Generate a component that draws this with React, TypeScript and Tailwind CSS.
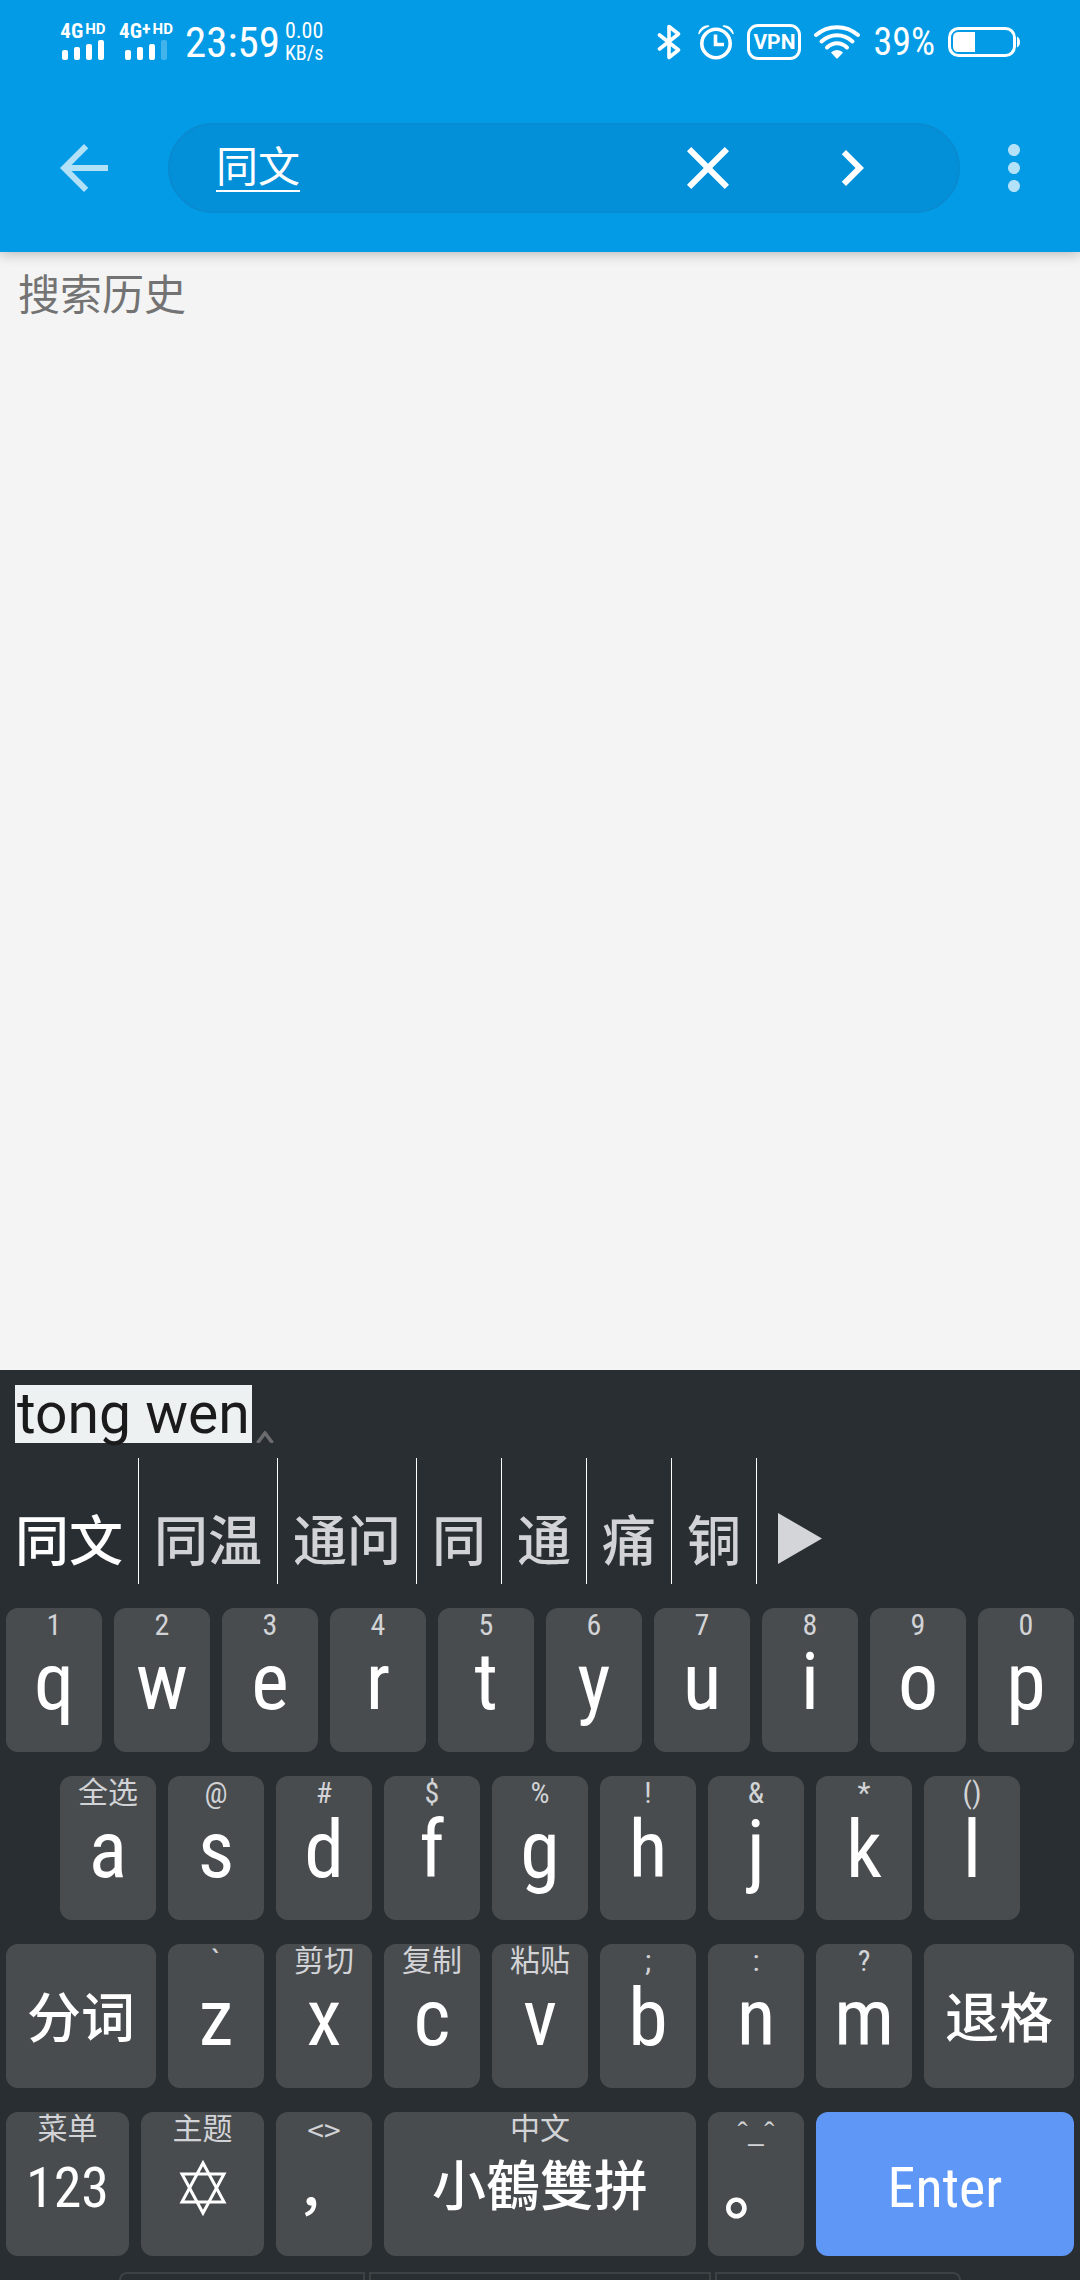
import React, { useState } from "react";
import { MdArrowBack, MdChevronRight, MdClose, MdMoreVert } from "react-icons/md";

type KeyDef = {
  label: React.ReactNode;
  hint?: string;
  name?: string;
  kind: "letter" | "word" | "latin" | "comma" | "period" | "icon";
  span?: string;
  primary?: boolean;
  wideHint?: boolean;
};

const letter = (label: string, hint: string): KeyDef => ({ label, hint, kind: "letter" });

const Star = () => (
  <svg viewBox="0 0 50 58" className="h-[58px] w-[50px]" fill="none" stroke="currentColor" strokeWidth="3" aria-hidden="true">
    <path d="M25 4 46 43H4z" />
    <path d="M25 54 46 15H4z" />
  </svg>
);

const rows: KeyDef[][] = [
  [
    letter("q", "1"), letter("w", "2"), letter("e", "3"), letter("r", "4"), letter("t", "5"),
    letter("y", "6"), letter("u", "7"), letter("i", "8"), letter("o", "9"), letter("p", "0"),
  ],
  [
    letter("a", "全选"), letter("s", "@"), letter("d", "#"), letter("f", "$"), letter("g", "%"),
    letter("h", "!"), letter("j", "&"), letter("k", "*"), letter("l", "()"),
  ],
  [
    { label: "分词", kind: "word", span: "col-span-6" },
    letter("z", "`"), letter("x", "剪切"), letter("c", "复制"), letter("v", "粘贴"),
    letter("b", ";"), letter("n", ":"), letter("m", "?"),
    { label: "退格", kind: "word", span: "col-span-6" },
  ],
  [
    { label: "123", hint: "菜单", kind: "latin", span: "col-span-5" },
    { label: <Star />, hint: "主题", name: "主题", kind: "icon", span: "col-span-5" },
    { label: "，", hint: "<>", kind: "comma", wideHint: true },
    { label: "小鶴雙拼", hint: "中文", kind: "word", span: "col-span-12" },
    { label: "。", hint: "ˆ_ˆ", kind: "period", wideHint: true },
    { label: "Enter", kind: "latin", span: "col-span-10", primary: true },
  ],
];

const labelStyle = {
  letter: "text-[80px] leading-[80px]",
  word: "text-[54px] leading-[84px] font-medium",
  latin: "text-[56px] leading-[84px]",
  comma: "text-[54px] leading-[92px] font-medium",
  period: "text-[64px] leading-[92px] font-bold",
  icon: "flex h-[84px] items-center",
};

function Key({ k }: { k: KeyDef }) {
  return (
    <button
      type="button"
      aria-label={k.name}
      className={`mx-1.5 my-3 flex h-36 flex-col items-center whitespace-nowrap rounded-xl text-white ${
        k.primary ? "bg-[#5e97f6]" : "bg-[#494c4e]"
      } ${k.span ?? "col-span-4"}`}
    >
      <span
        className={`block h-[34px] text-[30px] leading-[34px] text-[#d2d3d6] ${
          k.wideHint ? "font-['Noto_Sans_CJK_SC']" : ""
        }`}
      >
        {k.hint}
      </span>
      <span className={`block ${labelStyle[k.kind]}`}>{k.label}</span>
    </button>
  );
}

const candidates = ["同文", "同温", "通问", "同", "通", "痛", "铜"];

function Signal({ plus, weak }: { plus?: boolean; weak?: boolean }) {
  return (
    <div className={`flex flex-col items-center ${plus ? "w-14" : "w-[46px]"}`}>
      <div className="flex h-4 items-start font-bold leading-4">
        <span className="text-[21px] leading-4">4G</span>
        {plus && <span className="text-lg leading-3">+</span>}
        <span className="ml-0.5 font-[Roboto] text-[15px] leading-3">HD</span>
      </div>
      <svg viewBox="0 0 44 22" className="h-[22px] w-11" fill="currentColor" aria-hidden="true">
        <rect x="1" y="11" width="6" height="10" rx="2" />
        <rect x="13" y="8" width="6" height="13" rx="2" />
        <rect x="25" y="5" width="6" height="16" rx="2" />
        <rect x="37" y="1" width="6" height="20" rx="2" opacity={weak ? 0.25 : 1} />
      </svg>
    </div>
  );
}

function StatusBar() {
  return (
    <div className="flex h-[84px] items-center justify-between px-[60px]">
      <div className="flex items-center">
        <Signal />
        <div className="ml-3">
          <Signal plus weak />
        </div>
        <span className="ml-[11px] text-[43px] leading-[48px]">23:59</span>
        <span className="ml-[5px] flex flex-col">
          <span className="text-[22px] leading-[23px]">0.00</span>
          <span className="text-[20px] leading-[23px]">KB/s</span>
        </span>
      </div>
      <div className="flex items-center gap-[13px]">
        <svg viewBox="0 0 24 36" className="mr-1 h-9 w-6" fill="none" stroke="currentColor" strokeWidth="3.6" strokeLinejoin="round" strokeLinecap="round" aria-label="蓝牙" role="img">
          <path d="M2.500 11 21.500 26 12 33.500V2.500L21.500 10 2.500 25" />
        </svg>
        <svg viewBox="0 0 36 36" className="h-9 w-9" fill="none" stroke="currentColor" strokeWidth="3.600" aria-label="闹钟" role="img">
          <circle cx="18" cy="19.500" r="14.200" />
          <path d="M17.500 10.500V20.500H26" />
          <path d="M1 9.500C2 4.500 6 1.800 10.500 2 6 3.500 3 6 1 9.500zM35 9.500C34 4.500 30 1.800 25.500 2 30 3.500 33 6 35 9.500z" fill="currentColor" strokeWidth="1.500" strokeLinejoin="round" />
        </svg>
        <span className="flex h-9 w-[54px] items-center justify-center rounded-[11px] border-3 border-white font-[Roboto] text-[21px] font-bold leading-6">
          VPN
        </span>
        <svg viewBox="0 0 46 34" className="h-[34px] w-[46px]" fill="none" stroke="currentColor" strokeWidth="4" strokeLinecap="round" aria-label="无线网络" role="img">
          <path d="M2 10C14-.5 32-.5 44 10" />
          <path d="M7.500 16.500C16.500 8.200 29.500 8.200 38.500 16.500" />
          <path d="M13 22.500C19 16.800 27 16.800 33 22.500" />
          <path d="M17 27.500C20.500 24 25.500 24 29 27.500L24 33Q23 34 22 33z" fill="currentColor" stroke="none" />
        </svg>
        <span className="text-[38px] leading-[44px]">39%</span>
        <svg viewBox="0 0 72 32" className="h-8 w-[72px]" fill="none" aria-label="电量 39%" role="img">
          <rect x="1.500" y="2.500" width="65" height="27" rx="9" stroke="currentColor" strokeWidth="3" />
          <path d="M10 6H27V26H10Q5 26 5 20V12Q5 6 10 6z" fill="currentColor" />
          <path d="M69 10.500Q72 12 72 16T69 21.500z" fill="currentColor" />
        </svg>
      </div>
    </div>
  );
}

export default function App() {
  const [query, setQuery] = useState("同文");
  return (
    <div
      lang="zh-CN"
      className="flex min-h-screen flex-col bg-[#f4f4f4] font-['Roboto_Condensed',Roboto,'Noto_Sans_CJK_SC',sans-serif]"
    >
      <header className="h-[252px] bg-[#039be5] text-white shadow-[0_2px_12px_rgba(0,0,0,0.25)]">
        <StatusBar />
        <form
          className="flex h-[168px] items-center pl-12 pr-[30px]"
          onSubmit={(e) => e.preventDefault()}
        >
          <button type="button" aria-label="返回" className="text-white/70">
            <MdArrowBack className="size-[72px]" />
          </button>
          <div className="ml-12 flex h-[90px] min-w-0 grow items-center rounded-full border-2 border-[#088bd0] bg-[#0490d9] pl-[46px] pr-[70px]">
            <input
              type="text"
              aria-label="搜索"
              value={query}
              onChange={(e) => setQuery(e.target.value)}
              className="min-w-0 grow bg-transparent text-[42px] leading-[60px] underline decoration-2 underline-offset-8 outline-none"
            />
            <button type="button" aria-label="清除" onClick={() => setQuery("")}>
              <MdClose className="size-[72px]" />
            </button>
            <button type="submit" aria-label="前往" className="ml-[72px]">
              <MdChevronRight className="size-[72px]" />
            </button>
          </div>
          <button type="button" aria-label="更多" className="ml-[18px] text-white/70">
            <MdMoreVert className="size-[72px]" />
          </button>
        </form>
      </header>

      <main className="grow px-[18px] pt-3.5">
        <h1 className="text-[42px] leading-[60px] text-[#737373]">搜索历史</h1>
      </main>

      <section aria-label="键盘" className="bg-[#292e32] pt-[15px]">
        <div className="flex h-[58px] items-end px-[15px]">
          <span className="bg-[#edf1f2] px-0.5 font-[Roboto] text-[57px] leading-[58px] text-[#1b1b1b]">tong wen</span>
          <svg viewBox="0 0 18 12" className="ml-1 h-3 w-[18px]" fill="none" stroke="#6b6b6d" strokeWidth="3.500" aria-hidden="true">
            <path d="M1.500 12 9 2 16.500 12" />
          </svg>
        </div>

        <div className="mt-[15px] flex h-[126px]">
          {candidates.map((c, i) => (
            <button
              key={c}
              type="button"
              className={`flex items-end border-r border-white px-[15px] pb-[11px] text-[54px] leading-[60px] font-medium ${
                i === 0 ? "text-white" : "text-[#d2d3d6]"
              }`}
            >
              {c}
            </button>
          ))}
          <button type="button" aria-label="下一页" className="flex items-end px-[21px] pb-5 text-[#d4d5d8]">
            <svg viewBox="0 0 44 51" className="h-[51px] w-11" fill="currentColor" aria-hidden="true">
              <path d="M0 0 44 25.500 0 51z" />
            </svg>
          </button>
        </div>

        <div className="mt-3">
          {rows.map((row, r) => (
            <div key={r} className="grid grid-cols-[repeat(40,minmax(0,1fr))]">
              {r === 1 && <span className="col-span-2" />}
              {row.map((k, i) => (
                <Key key={i} k={k} />
              ))}
            </div>
          ))}
        </div>

        <div className="mt-1 grid h-2 grid-cols-[245fr_340fr_245fr] gap-1 px-[11%]">
          <span className="rounded-tl-lg border-l-2 border-t-2 border-r-2 border-[#3d4245]" />
          <span className="border-l-2 border-t-2 border-r-2 border-[#3d4245]" />
          <span className="rounded-tr-lg border-l-2 border-t-2 border-r-2 border-[#3d4245]" />
        </div>
      </section>
    </div>
  );
}
